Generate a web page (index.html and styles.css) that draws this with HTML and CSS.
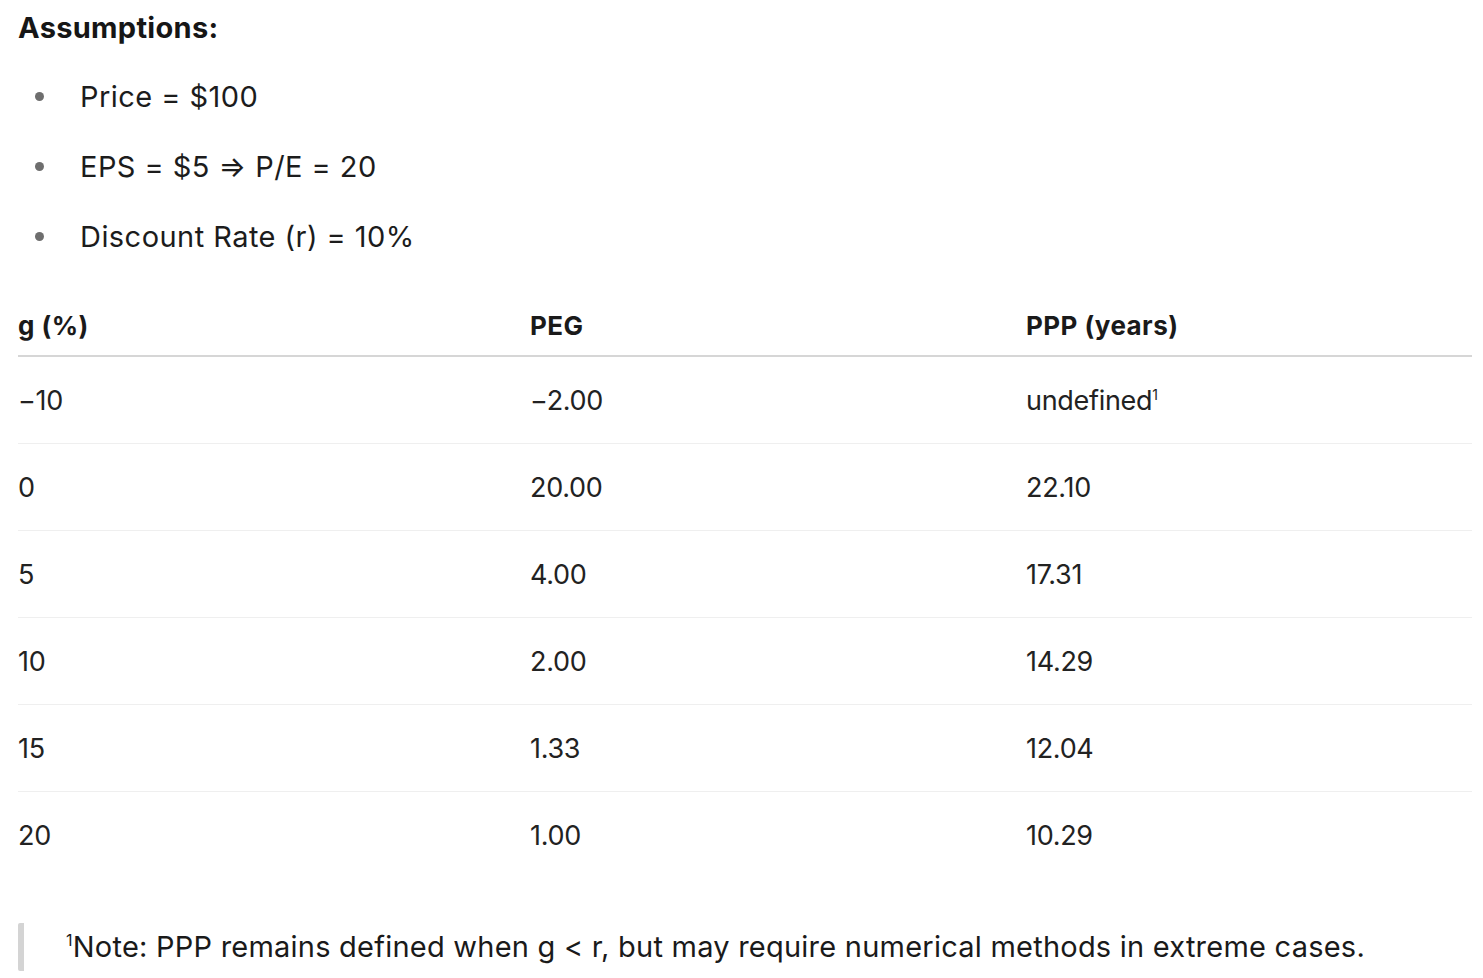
FILE: index.html
```html
<!DOCTYPE html>
<html>
<head>
<meta charset="utf-8">
<link rel="stylesheet" href="styles.css">
</head>
<body>
<div class="doc">
  <h3 class="title">Assumptions:</h3>
  <ul class="list">
    <li>Price = $100</li>
    <li>EPS = $5 ⇒ P/E = 20</li>
    <li>Discount Rate (r) = 10%</li>
  </ul>
  <table class="tbl">
    <colgroup><col class="c1"><col class="c2"><col class="c3"></colgroup>
    <thead>
      <tr><th>g (%)</th><th>PEG</th><th>PPP (years)</th></tr>
    </thead>
    <tbody>
      <tr><td>−10</td><td>−2.00</td><td>undefined<sup>1</sup></td></tr>
      <tr><td>0</td><td>20.00</td><td>22.10</td></tr>
      <tr><td>5</td><td>4.00</td><td>17.31</td></tr>
      <tr><td>10</td><td>2.00</td><td>14.29</td></tr>
      <tr><td>15</td><td>1.33</td><td>12.04</td></tr>
      <tr><td>20</td><td>1.00</td><td>10.29</td></tr>
    </tbody>
  </table>
  <blockquote class="note"><sup>1</sup>Note: PPP remains defined when g &lt; r, but may require numerical methods in extreme cases.</blockquote>
</div>
</body>
</html>
```
FILE: styles.css
```css
html, body {
  margin: 0;
  padding: 0;
  background: #ffffff;
}
.doc {
  padding: 10px 11px 0 18px;
  font-family: Inter, "Liberation Sans", sans-serif;
  color: #161616;
}
.title {
  margin: 0;
  font-size: 29px;
  font-weight: 700;
  line-height: 36px;
  letter-spacing: 0.3px;
}
.list {
  list-style: none;
  margin: 15px 0 0 0;
  padding: 0;
}
.list li {
  display: flex;
  align-items: center;
  height: 70px;
  font-size: 29px;
  letter-spacing: 0.45px;
  color: #1c1c1c;
}
.list li::before {
  content: "";
  width: 9px;
  height: 9px;
  border-radius: 50%;
  background: #6e6e6e;
  margin: 0 36px 0 17px;
  flex: none;
}
.tbl {
  width: 1454px;
  margin-top: 24px;
  border-collapse: collapse;
  table-layout: fixed;
}
.c1 { width: 512px; }
.c2 { width: 496px; }
.tbl th {
  text-align: left;
  font-size: 26px;
  font-weight: 700;
  letter-spacing: 0.45px;
  height: 60px;
  padding: 0;
  vertical-align: middle;
  border-bottom: 2px solid #d6d6d6;
  color: #1a1a1a;
}
.tbl td {
  height: 86px;
  padding: 0;
  font-size: 27px;
  letter-spacing: -0.3px;
  color: #222222;
  border-bottom: 1px solid #efefef;
  vertical-align: middle;
}
.tbl tbody tr:last-child td {
  border-bottom: none;
}
.tbl sup {
  font-size: 14px;
  vertical-align: 10px;
  line-height: 0;
}
.note {
  margin: 45px 0 0 0;
  padding: 0 0 0 42px;
  border-left: 6px solid #d4d4d4;
  border-radius: 2px;
  font-size: 29px;
  line-height: 48px;
  letter-spacing: 0.23px;
  color: #1a1a1a;
}
.note sup {
  font-size: 16px;
  vertical-align: 11px;
  line-height: 0;
}
```
